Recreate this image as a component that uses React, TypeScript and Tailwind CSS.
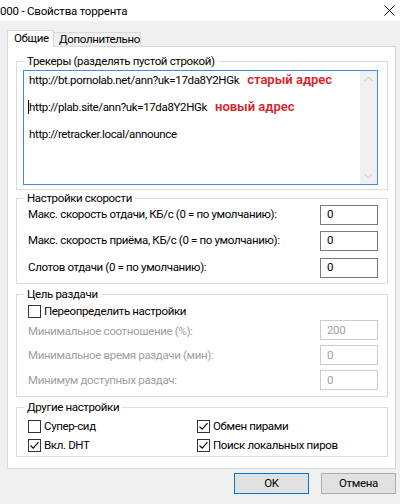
import React from "react";

function Check({ checked }: { checked?: boolean }) {
  return (
    <span className="inline-flex w-[13px] h-[13px] shrink-0 border border-[#333333] bg-white items-center justify-center">
      {checked && (
        <svg width="11" height="11" viewBox="0 0 11 11">
          <path d="M1.5 5.5 L4.2 8.2 L9.5 2.2" stroke="#000" strokeWidth="1.1" fill="none" />
        </svg>
      )}
    </span>
  );
}

function Group({ title, className, children }: { title: string; className?: string; children: React.ReactNode }) {
  return (
    <fieldset className={`border border-[#dcdcdc] m-0 p-0 min-w-0 ${className ?? ""}`}>
      <legend className="ml-[7px] px-[3px] leading-[14px]">{title}</legend>
      {children}
    </fieldset>
  );
}

function Field({ value, disabled }: { value: string; disabled?: boolean }) {
  return (
    <div
      className={`w-[58px] h-[20px] border flex items-center pl-[6px] bg-white ${
        disabled ? "border-[#cccccc] text-[#a0a0a0]" : "border-[#7a7a7a] text-black"
      }`}
    >
      {value}
    </div>
  );
}

export default function App() {
  return (
    <div className="w-[400px] h-[504px] overflow-hidden bg-[#f0f0f0] text-black text-[11.5px] tracking-[-0.35px] font-['Roboto',sans-serif]">
      {/* title bar */}
      <div className="h-[21px] bg-white flex items-center justify-between">
        <span className="leading-[16px] text-[11.5px] tracking-[-0.2px]">000 - Свойства торрента</span>
        <svg width="11" height="11" viewBox="0 0 11 11" className="mr-[5px]">
          <path d="M0.5 0.5 L10.5 10.5 M10.5 0.5 L0.5 10.5" stroke="#000" strokeWidth="1" />
        </svg>
      </div>

      {/* tabs */}
      <div className="pt-[9px] pl-[7px]">
        <div className="flex items-end h-[16px]">
          <div className="relative z-10 -mb-px h-[17px] w-[47px] border-x border-t border-[#d9d9d9] bg-white pl-[6px] leading-[15px] whitespace-nowrap">
            Общие
          </div>
          <div className="h-[14px] w-[87px] border-r border-t border-[#d9d9d9] bg-[#f0f0f0] pl-[5px] leading-[13px] whitespace-nowrap">
            Дополнительно
          </div>
        </div>
      </div>

      {/* panel */}
      <div className="ml-[7px] w-[389px] h-[423px] border border-[#d9d9d9] bg-white px-[8px] pt-[7px]">
        <Group title="Трекеры (разделять пустой строкой)" className="w-[372px]">
          <div className="pl-[6px] pt-[2px] pb-[4px]">
            <div className="relative w-[355px] h-[115px] border border-[#3d8ee0] bg-white flex">
              <div className="flex-1 pl-[5px] pt-[2px] leading-[14px]">
                <div className="h-[27px] whitespace-nowrap">
                  http://bt.pornolab.net/ann?uk=17da8Y2HGk
                  <span className="ml-[8px] text-[#d9232a] font-semibold text-[13px] tracking-[0px]">старый адрес</span>
                </div>
                <div className="h-[27px] whitespace-nowrap">
                  <span className="inline-block w-px h-[14px] bg-black align-[-3px] -ml-[1px]" />
                  http://plab.site/ann?uk=17da8Y2HGk
                  <span className="ml-[8px] text-[#d9232a] font-semibold text-[13px] tracking-[0px]">новый адрес</span>
                </div>
                <div className="h-[27px] whitespace-nowrap">http://retracker.local/announce</div>
              </div>
              <div className="w-[17px] h-full bg-[#f0f0f0] flex flex-col justify-between items-center py-[5px]">
                <svg width="9" height="6" viewBox="0 0 9 6">
                  <path d="M0.5 5 L4.5 1 L8.5 5" stroke="#c2c2c2" strokeWidth="1" fill="none" />
                </svg>
                <svg width="9" height="6" viewBox="0 0 9 6">
                  <path d="M0.5 1 L4.5 5 L8.5 1" stroke="#c2c2c2" strokeWidth="1" fill="none" />
                </svg>
              </div>
            </div>
          </div>
        </Group>

        <Group title="Настройки скорости" className="w-[372px] mt-[1px]">
          <div className="pl-[11px] pr-[9px] pb-[5px] flex flex-col">
            <div className="flex items-center justify-between">
              <span>Макс. скорость отдачи, КБ/с (0 = по умолчанию):</span>
              <Field value="0" />
            </div>
            <div className="flex items-center justify-between mt-[6px]">
              <span>Макс. скорость приёма, КБ/с (0 = по умолчанию):</span>
              <Field value="0" />
            </div>
            <div className="flex items-center justify-between mt-[7px]">
              <span>Слотов отдачи (0 = по умолчанию):</span>
              <Field value="0" />
            </div>
          </div>
        </Group>

        <Group title="Цель раздачи" className="w-[372px] mt-[3px]">
          <div className="pl-[11px] pr-[9px] pb-[6px] flex flex-col">
            <div className="h-[19px] pt-[2px] flex items-center gap-[3px]">
              <Check />
              <span>Переопределить настройки</span>
            </div>
            <div className="flex items-center justify-between text-[#a0a0a0]">
              <span className="pt-[3px]">Минимальное соотношение (%):</span>
              <Field value="200" disabled />
            </div>
            <div className="flex items-center justify-between mt-[5px] text-[#a0a0a0]">
              <span>Минимальное время раздачи (мин):</span>
              <Field value="0" disabled />
            </div>
            <div className="flex items-center justify-between mt-[5px] text-[#a0a0a0]">
              <span className="pt-[1px]">Минимум доступных раздач:</span>
              <Field value="0" disabled />
            </div>
          </div>
        </Group>

        <Group title="Другие настройки" className="w-[372px] mt-[3px]">
          <div className="pl-[11px] pt-[2px] pb-[1px] grid grid-cols-[169px_1fr]">
            <div className="h-[20px] flex items-center gap-[3px]">
              <Check />
              <span>Супер-сид</span>
            </div>
            <div className="h-[20px] flex items-center gap-[3px]">
              <Check checked />
              <span>Обмен пирами</span>
            </div>
            <div className="h-[19px] flex items-center gap-[3px]">
              <Check checked />
              <span>Вкл. DHT</span>
            </div>
            <div className="h-[19px] flex items-center gap-[3px]">
              <Check checked />
              <span>Поиск локальных пиров</span>
            </div>
          </div>
        </Group>
      </div>

      {/* buttons */}
      <div className="mt-[4px] pr-[4px] flex justify-end gap-[12px]">
        <button className="w-[75px] h-[21px] border border-[#0078d7] bg-[#e1e1e1] leading-[19px]">
          OK
        </button>
        <button className="w-[75px] h-[21px] border border-[#adadad] bg-[#e1e1e1] leading-[19px]">
          Отмена
        </button>
      </div>
    </div>
  );
}
